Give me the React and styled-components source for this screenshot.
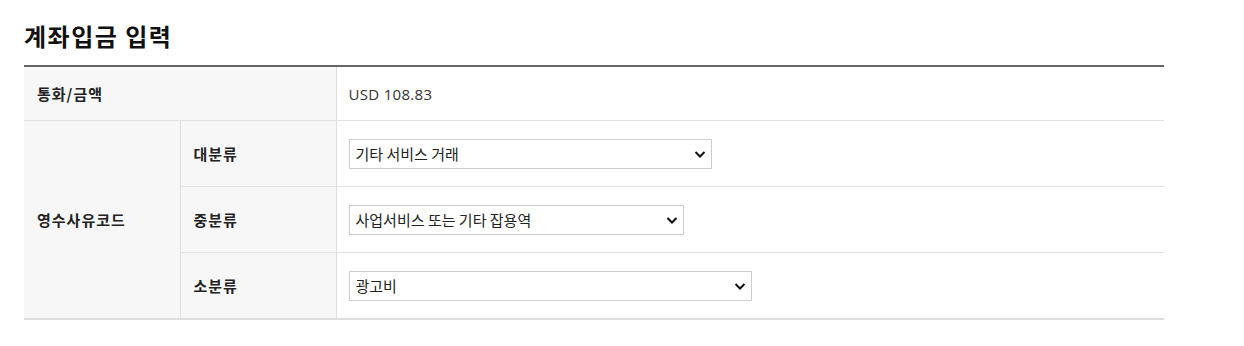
import React from 'react';
import styled, { createGlobalStyle } from 'styled-components';

const Global = createGlobalStyle`
  body {
    margin: 0;
    background: #fff;
    font-family: "Noto Sans CJK KR", "Noto Sans", sans-serif;
    color: #222;
  }
`;

const Page = styled.div`
  padding: 20px 80px 0 24px;
`;

const Title = styled.h2`
  margin: 0 0 14px;
  font-size: 24px;
  font-weight: 700;
  line-height: 31px;
  letter-spacing: 1.5px;
  color: #111;
`;

const Table = styled.table`
  width: 1140px;
  border-collapse: collapse;
  table-layout: fixed;
  border-top: 2px solid #666;
  border-bottom: 2px solid #ddd;
  font-size: 15px;
`;

const Head = styled.th`
  background: #f7f7f7;
  text-align: left;
  font-weight: 700;
  letter-spacing: 1px;
  padding: 0 0 0 13px;
  height: ${p => p.$h}px;
  border-bottom: 1px solid #e3e3e3;
  border-right: 1px solid #ddd;
  color: #222;
`;

const Cell = styled.td`
  padding: 0 12px;
  height: ${p => p.$h}px;
  border-bottom: 1px solid #e3e3e3;
  color: #333;
`;

const Amount = styled.span`
  font-family: "Open Sans", "Noto Sans CJK KR", sans-serif;
  font-size: 15px;
  letter-spacing: 0.3px;
`;

const SelectWrap = styled.div`
  position: relative;
  width: ${p => p.$w}px;
`;

const Select = styled.select`
  appearance: none;
  width: 100%;
  height: 30px;
  border: 1px solid #ccc;
  background: #fff;
  padding: 0 30px 0 6px;
  font-family: inherit;
  font-size: 15px;
  color: #222;
  border-radius: 0;
`;

const Chevron = styled.svg`
  position: absolute;
  right: 6px;
  top: 9px;
  pointer-events: none;
`;

function Dropdown({ width, value }) {
  return (
    <SelectWrap $w={width}>
      <Select defaultValue={value}>
        <option>{value}</option>
      </Select>
      <Chevron width="12" height="12" viewBox="0 0 12 12">
        <path d="M1.5 4 L6 8.5 L10.5 4" fill="none" stroke="#111" strokeWidth="2" />
      </Chevron>
    </SelectWrap>
  );
}

export default function App() {
  return (
    <Page>
      <Global />
      <Title>계좌입금 입력</Title>
      <Table>
        <colgroup>
          <col style={{ width: 156 }} />
          <col style={{ width: 156 }} />
          <col />
        </colgroup>
        <tbody>
          <tr>
            <Head colSpan={2} $h={53}>통화/금액</Head>
            <Cell $h={53}><Amount>USD 108.83</Amount></Cell>
          </tr>
          <tr>
            <Head rowSpan={3} $h={65}>영수사유코드</Head>
            <Head $h={65}>대분류</Head>
            <Cell $h={65}><Dropdown width={363} value="기타 서비스 거래" /></Cell>
          </tr>
          <tr>
            <Head $h={65}>중분류</Head>
            <Cell $h={65}><Dropdown width={335} value="사업서비스 또는 기타 잡용역" /></Cell>
          </tr>
          <tr>
            <Head $h={65}>소분류</Head>
            <Cell $h={65}><Dropdown width={403} value="광고비" /></Cell>
          </tr>
        </tbody>
      </Table>
    </Page>
  );
}
